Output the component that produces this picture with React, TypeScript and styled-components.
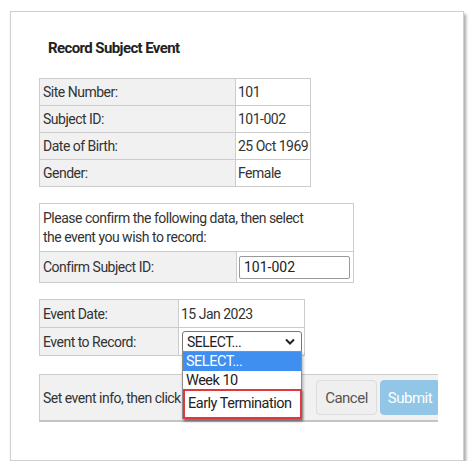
import styled, { createGlobalStyle } from "styled-components";

const GlobalStyle = createGlobalStyle`
  body {
    margin: 0;
    background: #ffffff;
    font-family: Roboto, "Liberation Sans", Arial, sans-serif;
    color: #333333;
  }
`;

const Frame = styled.div`
  box-sizing: border-box;
  margin: 11px 0 0 10px;
  width: 454px;
  height: 450px;
  border: 1px solid #cfcfcf;
  box-shadow: 2px 3px 3px rgba(0, 0, 0, 0.35);
  padding: 27px 0 0 28px;
`;

const Title = styled.h3`
  margin: 0 0 21px 9px;
  font-size: 15px;
  line-height: 18px;
  font-weight: 700;
  letter-spacing: -0.6px;
  color: #222222;
`;

const Table = styled.table<{ $width: number; $gap?: number }>`
  border-collapse: collapse;
  table-layout: fixed;
  width: ${(p) => p.$width}px;
  margin-bottom: ${(p) => p.$gap ?? 16}px;
  font-size: 14px;
  letter-spacing: -0.5px;
`;

const Col = styled.col<{ $width: number }>`
  width: ${(p) => p.$width}px;
`;

const Cell = styled.td<{ $label?: boolean; $height?: number }>`
  box-sizing: border-box;
  border: 1px solid #cccccc;
  background: ${(p) => (p.$label ? "#f1f1f1" : "#ffffff")};
  height: ${(p) => p.$height ?? 27}px;
  padding: 0 1px 0 ${(p) => (p.$label ? 3 : 2)}px;
  line-height: 18px;
  vertical-align: middle;
  white-space: nowrap;
  position: relative;
`;

const Note = styled.td`
  border: 1px solid #cccccc;
  height: 47px;
  padding: 0 3px;
  line-height: 19px;
`;

const TextInput = styled.input`
  box-sizing: border-box;
  width: 111px;
  height: 23px;
  border: 1px solid #9a9a9a;
  border-radius: 2px;
  padding: 0 4px;
  font: inherit;
  color: #222222;
`;

const SelectBox = styled.div`
  box-sizing: border-box;
  display: flex;
  align-items: center;
  justify-content: space-between;
  width: 120px;
  height: 22px;
  margin-left: 1px;
  border: 1px solid #767676;
  border-radius: 3px;
  padding: 0 6px 0 4px;
  color: #222222;
  background: #ffffff;
`;

const Options = styled.ul`
  position: absolute;
  left: 3px;
  top: 23px;
  z-index: 2;
  box-sizing: border-box;
  width: 120px;
  margin: 0;
  padding: 0;
  list-style: none;
  background: #ffffff;
  border: 1px solid #8f8f8f;
  box-shadow: 1px 2px 3px rgba(0, 0, 0, 0.3);
`;

const Option = styled.li<{ $active?: boolean; $marked?: boolean }>`
  box-sizing: border-box;
  height: 19px;
  line-height: 19px;
  padding: 0 3px;
  font-size: 14.5px;
  color: ${(p) => (p.$active ? "#ffffff" : "#222222")};
  background: ${(p) => (p.$active ? "#3e8ff0" : "#ffffff")};
  ${(p) =>
    p.$marked &&
    `
    height: 30px;
    line-height: 26px;
    margin: -1px -1px -1px 0;
    width: 119px;
    border: 2px solid #e0383c;
    box-shadow: 1px 2px 2px rgba(0, 0, 0, 0.35);
  `}
`;

const ActionBar = styled.div`
  box-sizing: border-box;
  display: flex;
  align-items: center;
  width: 399px;
  height: 48px;
  overflow: hidden;
  background: #f1f1f1;
  border-top: 1px solid #cccccc;
  border-left: 1px solid #cccccc;
  border-bottom: 2px solid #c4c4c4;
  padding-left: 3px;
  font-size: 14px;
  letter-spacing: -0.5px;
`;

const BarText = styled.span`
  white-space: nowrap;
  width: 273px;
  flex-shrink: 0;
`;

const Button = styled.button<{ $primary?: boolean }>`
  box-sizing: border-box;
  flex-shrink: 0;
  height: 35px;
  padding: 0;
  width: ${(p) => (p.$primary ? 60 : 61)}px;
  margin-right: 3px;
  border-radius: 4px;
  font-family: inherit;
  font-size: 15px;
  letter-spacing: -0.5px;
  border: 1px solid ${(p) => (p.$primary ? "#91c6e6" : "#dddddd")};
  background: ${(p) => (p.$primary ? "#91c6e6" : "#efefef")};
  color: ${(p) => (p.$primary ? "#ffffff" : "#555555")};
`;

const Chevron = () => (
  <svg width="10" height="7" viewBox="0 0 10 7">
    <path d="M1 1.5 L5 5.5 L9 1.5" fill="none" stroke="#222" strokeWidth="2" />
  </svg>
);

export default function App() {
  return (
    <>
      <GlobalStyle />
      <Frame>
        <Title>Record Subject Event</Title>

        <Table $width={271}>
          <colgroup>
            <Col $width={196} />
            <Col $width={75} />
          </colgroup>
          <tbody>
            <tr>
              <Cell $label>Site Number:</Cell>
              <Cell>101</Cell>
            </tr>
            <tr>
              <Cell $label>Subject ID:</Cell>
              <Cell>101-002</Cell>
            </tr>
            <tr>
              <Cell $label>Date of Birth:</Cell>
              <Cell>25 Oct 1969</Cell>
            </tr>
            <tr>
              <Cell $label>Gender:</Cell>
              <Cell>Female</Cell>
            </tr>
          </tbody>
        </Table>

        <Table $width={314}>
          <colgroup>
            <Col $width={197} />
            <Col $width={117} />
          </colgroup>
          <tbody>
            <tr>
              <Note colSpan={2}>
                Please confirm the following data, then select
                <br />
                the event you wish to record:
              </Note>
            </tr>
            <tr>
              <Cell $label $height={31}>Confirm Subject ID:</Cell>
              <Cell $height={31}>
                <TextInput defaultValue="101-002" />
              </Cell>
            </tr>
          </tbody>
        </Table>

        <Table $width={265} $gap={18}>
          <colgroup>
            <Col $width={139} />
            <Col $width={126} />
          </colgroup>
          <tbody>
            <tr>
              <Cell $label $height={28}>Event Date:</Cell>
              <Cell $height={28}>15 Jan 2023</Cell>
            </tr>
            <tr>
              <Cell $label $height={28}>Event to Record:</Cell>
              <Cell $height={28}>
                <SelectBox>
                  <span>SELECT...</span>
                  <Chevron />
                </SelectBox>
                <Options>
                  <Option $active>SELECT...</Option>
                  <Option>Week 10</Option>
                  <Option $marked>Early Termination</Option>
                </Options>
              </Cell>
            </tr>
          </tbody>
        </Table>

        <ActionBar>
          <BarText>Set event info, then click</BarText>
          <Button>Cancel</Button>
          <Button $primary>Submit</Button>
        </ActionBar>
      </Frame>
    </>
  );
}
